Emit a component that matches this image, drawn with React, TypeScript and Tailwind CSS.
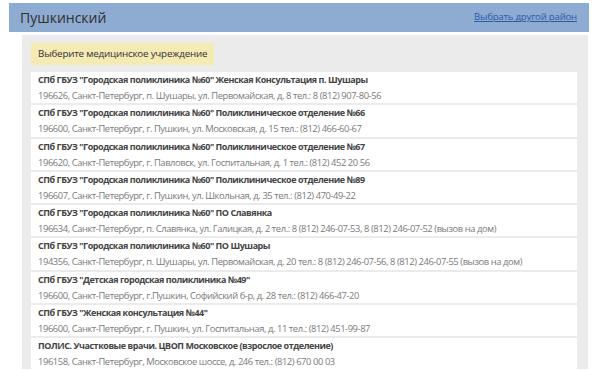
const CLINICS = [
  {
    name: 'СПб ГБУЗ "Городская поликлиника №60" Женская Консультация п. Шушары',
    address: '196626, Санкт-Петербург, п. Шушары, ул. Первомайская, д. 8 тел.: 8 (812) 907-80-56',
  },
  {
    name: 'СПб ГБУЗ "Городская поликлиника №60" Поликлиническое отделение №66',
    address: '196600, Санкт-Петербург, г. Пушкин, ул. Московская, д. 15 тел.: (812) 466-60-67',
  },
  {
    name: 'СПб ГБУЗ "Городская поликлиника №60" Поликлиническое отделение №67',
    address: '196620, Санкт-Петербург, г. Павловск, ул. Госпитальная, д. 1 тел.: (812) 452 20 56',
  },
  {
    name: 'СПб ГБУЗ "Городская поликлиника №60" Поликлиническое отделение №89',
    address: '196607, Санкт-Петербург, г. Пушкин, ул. Школьная, д. 35 тел.: (812) 470-49-22',
  },
  {
    name: 'СПб ГБУЗ "Городская поликлиника №60" ПО Славянка',
    address: '196634, Санкт-Петербург, п. Славянка, ул. Галицкая, д. 2 тел.: 8 (812) 246-07-53, 8 (812) 246-07-52 (вызов на дом)',
  },
  {
    name: 'СПб ГБУЗ "Городская поликлиника №60" ПО Шушары',
    address: '194356, Санкт-Петербург, п. Шушары, ул. Первомайская, д. 20 тел.: 8 (812) 246-07-56, 8 (812) 246-07-55 (вызов на дом)',
  },
  {
    name: 'СПб ГБУЗ "Детская городская поликлиника №49"',
    address: '196600, Санкт-Петербург, г.Пушкин, Софийский б-р, д. 28 тел.: (812) 466-47-20',
  },
  {
    name: 'СПб ГБУЗ "Женская консультация №44"',
    address: '196600, Санкт-Петербург, г. Пушкин, ул. Госпитальная, д. 11 тел.: (812) 451-99-87',
  },
  {
    name: 'ПОЛИС. Участковые врачи. ЦВОП Московское (взрослое отделение)',
    address: '196158, Санкт-Петербург, Московское шоссе, д. 246 тел.: (812) 670 00 03',
  },
]

export default function App() {
  return (
    <div className="h-[370px] w-[600px] overflow-hidden bg-white pt-[3px] font-['Open_Sans',sans-serif]">
      {/* District header */}
      <div className="ml-[9px] flex h-[29px] w-[580px] items-center justify-between bg-[#8eabd1] pl-[11px] pr-[12px]">
        <h1 className="text-[14px] text-[#2f2f2f]">Пушкинский</h1>
        <a href="#" className="text-[9.6px] tracking-[-0.2px] text-[#2b5aa9] underline">Выбрать другой район</a>
      </div>

      <div className="ml-[22px] mt-[3px] w-[566px] bg-[#ebebeb] pl-[9px] pr-[11px] pt-[8px]">
        <div className="flex h-[22px] w-fit items-center bg-[#f4eab4] px-[7px] text-[9.8px] tracking-[-0.2px] text-[#333]">
          Выберите медицинское учреждение
        </div>

        <div className="mt-[7px] flex flex-col gap-[2px]">
          {CLINICS.map((c) => (
            <div key={c.name} className="h-[31.25px] bg-white pl-[7px]">
              <p className="whitespace-nowrap text-[9px] font-bold leading-[15px] tracking-[-0.45px] text-[#444]">{c.name}</p>
              <p className="mt-[1px] whitespace-nowrap text-[9.4px] leading-[16px] tracking-[-0.42px] text-[#7a7a7a]">{c.address}</p>
            </div>
          ))}
        </div>
      </div>
    </div>
  )
}
